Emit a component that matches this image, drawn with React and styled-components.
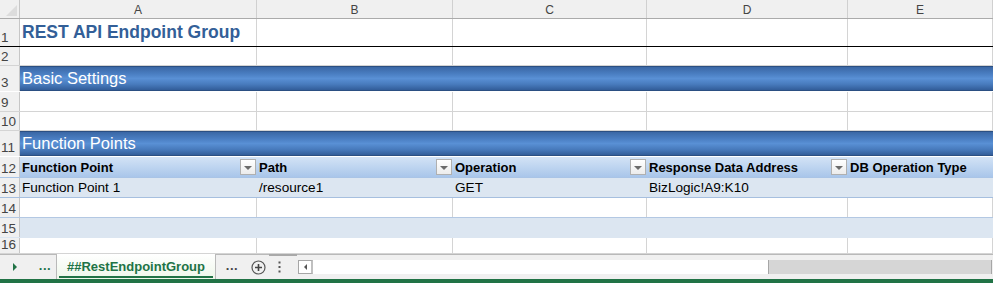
import styled, { createGlobalStyle } from 'styled-components';

const GlobalStyle = createGlobalStyle`
  html, body {
    margin: 0;
    padding: 0;
    background: #ffffff;
    overflow: hidden;
  }
  body {
    font-family: "Liberation Sans", Arial, sans-serif;
  }
`;

const COLS = '20px 237px 196px 194px 201px 1fr';
const GRID = '#d4d4d4';

const Sheet = styled.div`
  width: 993px;
  height: 283px;
  display: flex;
  flex-direction: column;
  overflow: hidden;
  background: #fff;
`;

const Row = styled.div`
  display: grid;
  grid-template-columns: ${COLS};
  height: ${p => p.h}px;
  box-sizing: border-box;
  border-bottom: 1px solid ${p => p.line || GRID};
  background: ${p => p.bg || '#fff'};
  flex-shrink: 0;
`;

const Corner = styled.div`
  background: #f0f0f0;
  border-right: 1px solid #c6c6c6;
  position: relative;
  &::after {
    content: '';
    position: absolute;
    right: 2px;
    bottom: 2px;
    border-left: 11px solid transparent;
    border-bottom: 11px solid #dcdcdc;
  }
`;

const ColHead = styled.div`
  background: #f0f0f0;
  border-right: 1px solid #d0d0d0;
  color: #444;
  font-size: 12px;
  display: flex;
  align-items: center;
  justify-content: center;
  padding-top: 1px;
`;

const RowHead = styled.div`
  background: #f0f0f0;
  border-right: 1px solid #c6c6c6;
  color: #444;
  font-size: 13.5px;
  display: flex;
  align-items: flex-end;
  padding: 0 0 1px 1px;
  overflow: hidden;
  line-height: 15px;
`;

const Cell = styled.div`
  border-right: ${p => (p.plain ? 'none' : `1px solid ${GRID}`)};
  font-size: 13.6px;
  color: #000;
  display: flex;
  align-items: flex-end;
  padding: 0 2px 2px;
  white-space: nowrap;
  overflow: hidden;
`;

const Title = styled.div`
  grid-column: 2 / 3;
  border-right: 1px solid ${GRID};
  color: #335f98;
  font-weight: bold;
  font-size: 17.5px;
  display: flex;
  align-items: flex-end;
  padding: 0 2px 3px;
  white-space: nowrap;
`;

const Band = styled.div`
  grid-column: 2 / -1;
  color: #fff;
  font-size: 16.5px;
  display: flex;
  align-items: flex-end;
  padding: 0 2px 2px;
  box-sizing: border-box;
  border-top: 1px solid #2b4f82;
  border-bottom: 1px solid #2b4f82;
  background: linear-gradient(#3a67a5 0%, #4a7ec2 30%, #5990d5 50%, #487bbd 75%, #325d99 100%);
`;

const HeadCell = styled.div`
  display: flex;
  align-items: center;
  justify-content: space-between;
  font-size: 13px;
  font-weight: bold;
  color: #000;
  padding: 0 1px 0 2px;
  white-space: nowrap;
  overflow: hidden;
`;

const Dropdown = styled.div`
  width: 16px;
  height: 16px;
  flex-shrink: 0;
  box-sizing: border-box;
  border: 1px solid #b0b0b0;
  background: linear-gradient(#ffffff, #ececec);
  display: flex;
  align-items: center;
  justify-content: center;
  &::after {
    content: '';
    border-left: 4px solid transparent;
    border-right: 4px solid transparent;
    border-top: 4px solid #6b6b6b;
    margin-top: 1px;
  }
`;

const TabBar = styled.div`
  height: 25px;
  box-sizing: border-box;
  border-top: 1px solid #b9b9b9;
  background: #f0f0f0;
  display: flex;
  align-items: stretch;
  position: relative;
  flex-shrink: 0;
`;

const NavArrow = styled.div`
  width: 30px;
  display: flex;
  align-items: center;
  justify-content: center;
  padding-right: 4px;
  &::after {
    content: '';
    border-top: 4px solid transparent;
    border-bottom: 4px solid transparent;
    border-left: 4px solid #217346;
  }
`;

const Dots = styled.div`
  width: ${p => p.w}px;
  display: flex;
  align-items: center;
  justify-content: center;
  color: ${p => p.c};
  font-size: 13px;
  font-weight: bold;
  letter-spacing: 0.5px;
  padding-bottom: 4px;
`;

const Tab = styled.div`
  width: 160px;
  box-sizing: border-box;
  margin-top: -1px;
  border-left: 1px solid #b9b9b9;
  border-right: 1px solid #b9b9b9;
  background: linear-gradient(#ffffff, #eef7ea);
  color: #217346;
  font-size: 13px;
  font-weight: bold;
  display: flex;
  align-items: center;
  justify-content: center;
  position: relative;
  &::after {
    content: '';
    position: absolute;
    left: 2px;
    right: 2px;
    bottom: 1px;
    height: 2px;
    background: #217346;
  }
`;

const IconBox = styled.div`
  width: ${p => p.w}px;
  display: flex;
  align-items: center;
  justify-content: center;
`;

const Scroll = styled.div`
  flex: 1;
  display: flex;
  align-items: center;
  padding-right: 1px;
`;

const ScrollTrack = styled.div`
  flex: 1;
  height: 14px;
  display: flex;
  box-sizing: border-box;
`;

const ScrollBtn = styled.div`
  width: 15px;
  box-sizing: border-box;
  border: 1px solid #a6a6a6;
  border-right: 2px solid #c0c0c0;
  background: #fff;
  display: flex;
  align-items: center;
  justify-content: center;
  &::after {
    content: '';
    border-top: 3px solid transparent;
    border-bottom: 3px solid transparent;
    border-right: 3px solid #555;
  }
`;

const ScrollWhite = styled.div`
  width: 455px;
  background: #fff;
  border-right: 1px solid #a6a6a6;
`;

const ScrollThumb = styled.div`
  flex: 1;
  background: #d6d6d6;
  border-right: 1px solid #a6a6a6;
`;

const Grip = styled.div`
  position: absolute;
  top: -1px;
  left: 269px;
  width: 28px;
  height: 2px;
  background: #a9a9a9;
`;

const Status = styled.div`
  flex: 1;
  background: #217346;
`;

const cols = ['A', 'B', 'C', 'D', 'E'];

const Empty = ({ n, h, bg, line, plain }) => (
  <Row h={h} bg={bg} line={line}>
    <RowHead>{n}</RowHead>
    {cols.map(c => (
      <Cell key={c} plain={plain} />
    ))}
  </Row>
);

const headers = ['Function Point', 'Path', 'Operation', 'Response Data Address', 'DB Operation Type'];
const values = ['Function Point 1', '/resource1', 'GET', 'BizLogic!A9:K10', ''];

export default function App() {
  return (
    <>
      <GlobalStyle />
      <Sheet>
        <Row h={19} line="#ababab" bg="#f0f0f0">
          <Corner />
          {cols.map(c => (
            <ColHead key={c}>{c}</ColHead>
          ))}
        </Row>

        <Row h={28} line="#000">
          <RowHead>1</RowHead>
          <Title>REST API Endpoint Group</Title>
          <Cell />
          <Cell />
          <Cell />
          <Cell />
        </Row>

        <Empty n={2} h={19} />

        <Row h={26} line="transparent">
          <RowHead>3</RowHead>
          <Band>Basic Settings</Band>
        </Row>

        <Empty n={9} h={20} />
        <Empty n={10} h={19} />

        <Row h={26} line="transparent">
          <RowHead>11</RowHead>
          <Band>Function Points</Band>
        </Row>

        <Row h={21} line="#a9c4e6" bg="linear-gradient(#d3e3f6, #a9c6ea)">
          <RowHead>12</RowHead>
          {headers.map((t, i) => (
            <HeadCell key={t}>
              {t}
              {i < 4 && <Dropdown />}
            </HeadCell>
          ))}
        </Row>

        <Row h={20} line="#a6bfdf" bg="#dce6f1">
          <RowHead>13</RowHead>
          {values.map((t, i) => (
            <Cell key={i} plain>
              {t}
            </Cell>
          ))}
        </Row>

        <Empty n={14} h={20} line="#b3c8e3" />
        <Empty n={15} h={20} bg="#dce6f1" line="#dce6f1" plain />
        <Empty n={16} h={16} />

        <TabBar>
          <Grip />
          <NavArrow />
          <Dots w={22} c="#217346">...</Dots>
          <Tab>##RestEndpointGroup</Tab>
          <Dots w={32} c="#444">...</Dots>
          <IconBox w={20}>
            <svg width="15" height="15" viewBox="0 0 15 15">
              <circle cx="7.5" cy="7.5" r="6.5" fill="none" stroke="#555" strokeWidth="1.2" />
              <path d="M7.5 4v7M4 7.5h7" stroke="#444" strokeWidth="1.6" />
            </svg>
          </IconBox>
          <IconBox w={22}>
            <svg width="3" height="12" viewBox="0 0 3 12">
              <rect x="0.5" y="0.5" width="2" height="2" fill="#555" />
              <rect x="0.5" y="5" width="2" height="2" fill="#555" />
              <rect x="0.5" y="9.5" width="2" height="2" fill="#555" />
            </svg>
          </IconBox>
          <IconBox w={8} />
          <Scroll>
            <ScrollTrack>
              <ScrollBtn />
              <ScrollWhite />
              <ScrollThumb />
            </ScrollTrack>
          </Scroll>
        </TabBar>
        <Status />
      </Sheet>
    </>
  );
}
